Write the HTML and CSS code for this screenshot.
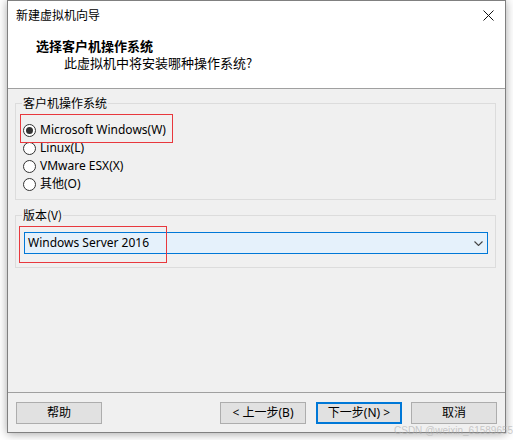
FILE: index.html
```html
<!DOCTYPE html>
<html lang="zh-CN">
<head>
<meta charset="utf-8">
<title>新建虚拟机向导</title>
<link rel="stylesheet" href="styles.css">
</head>
<body>
<div class="window">
  <div class="top">
    <div class="titlebar">
      <span class="title">新建虚拟机向导</span>
      <svg class="close" width="11" height="11" viewBox="0 0 11 11"><path d="M0.5 0.5 L10.5 10.5 M10.5 0.5 L0.5 10.5" stroke="#111" stroke-width="1" fill="none"/></svg>
    </div>
    <div class="header">
      <div class="h-title">选择客户机操作系统</div>
      <div class="h-sub">此虚拟机中将安装哪种操作系统?</div>
    </div>
  </div>
  <div class="content">
    <fieldset class="group">
      <legend>客户机操作系统</legend>
      <div class="radios">
        <div class="radio checked"><span class="circle"></span><span>Microsoft Windows(W)</span></div>
        <div class="radio"><span class="circle"></span><span>Linux(L)</span></div>
        <div class="radio"><span class="circle"></span><span>VMware ESX(X)</span></div>
        <div class="radio"><span class="circle"></span><span>其他(O)</span></div>
      </div>
    </fieldset>
    <fieldset class="group">
      <legend>版本(V)</legend>
      <div class="combo-wrap">
        <div class="combo">
          <span>Windows Server 2016</span>
          <svg class="chev" width="9" height="5" viewBox="0 0 9 5"><path d="M0.5 0.5 L4.5 4.5 L8.5 0.5" stroke="#444" stroke-width="1.1" fill="none"/></svg>
        </div>
      </div>
    </fieldset>
  </div>
  <div class="footer">
    <div class="btn">帮助</div>
    <div class="spacer"></div>
    <div class="btn">&lt; 上一步(B)</div>
    <div class="btn primary">下一步(N) &gt;</div>
    <div class="btn">取消</div>
  </div>
  <div class="mark m1"></div>
  <div class="mark m2"></div>
</div>
<div class="watermark">CSDN @weixin_61589655</div>
</body>
</html>
```

FILE: styles.css
```css
html, body {
  margin: 0;
  padding: 0;
  background: #ffffff;
}
body {
  width: 513px;
  height: 440px;
  overflow: hidden;
  position: relative;
  font-family: "Noto Sans", "Noto Sans CJK SC", sans-serif;
  font-size: 12px;
  color: #000;
}
.window {
  position: relative;
  margin-left: 7px;
  width: 499px;
  height: 433px;
  box-sizing: border-box;
  border: 1px solid #808080;
  background: #f0f0f0;
  display: flex;
  flex-direction: column;
  box-shadow: 0 1px 9px rgba(0, 0, 0, 0.35);
}
.top {
  background: #fff;
  border-bottom: 1px solid #a0a0a0;
  height: 88px;
  box-sizing: border-box;
}
.titlebar {
  height: 28px;
  display: flex;
  align-items: center;
  justify-content: space-between;
  padding: 0 11px 0 8px;
}
.title {
  font-family: "Noto Sans CJK SC", sans-serif;
  font-size: 12px;
  line-height: 16px;
}
.close {
  display: block;
  margin-top: 1px;
}
.header {
  padding-top: 8px;
  font-family: "Noto Sans CJK SC", sans-serif;
}
.h-title {
  font-weight: bold;
  font-size: 13px;
  line-height: 18px;
  padding-left: 28px;
}
.h-sub {
  font-size: 13px;
  line-height: 16px;
  padding-left: 56px;
}
.content {
  flex: 1;
  padding: 0 9px 0 7px;
}
.group {
  margin: 6px 0 0 0;
  padding: 0;
  border: 1px solid #dcdcdc;
  min-width: 0;
}
.group + .group {
  margin-top: 7px;
}
.group legend {
  margin-left: 6px;
  padding: 0 1px;
  line-height: 16px;
  font-family: "Noto Sans CJK SC", sans-serif;
  font-size: 12px;
}
.radios {
  padding: 10px 0 6px 7px;
}
.radio {
  height: 18px;
  display: flex;
  align-items: center;
  line-height: 16px;
}
.circle {
  width: 13px;
  height: 13px;
  box-sizing: border-box;
  border: 1px solid #333;
  border-radius: 50%;
  background: #fff;
  margin-right: 4px;
  display: flex;
  align-items: center;
  justify-content: center;
}
.radio.checked .circle::after {
  content: "";
  width: 7px;
  height: 7px;
  border-radius: 50%;
  background: #333;
}
.combo-wrap {
  padding: 9px 7px 13px 8px;
}
.combo {
  height: 22px;
  box-sizing: border-box;
  border: 1px solid #0078d7;
  background: #e5f1fb;
  display: flex;
  align-items: center;
  justify-content: space-between;
  padding: 0 4px 0 3px;
  line-height: 16px;
}
.chev {
  display: block;
  margin-top: 1px;
}
.footer {
  border-top: 1px solid #a0a0a0;
  padding: 9px 8px 8px 8px;
  display: flex;
  align-items: center;
}
.spacer {
  flex: 1;
}
.btn {
  width: 86px;
  height: 22px;
  box-sizing: border-box;
  border: 1px solid #adadad;
  background: #e1e1e1;
  display: flex;
  align-items: center;
  justify-content: center;
  line-height: 16px;
}
.btn + .btn {
  margin-left: 10px;
}
.btn.primary + .btn {
  margin-left: 9px;
}
.btn.primary {
  border: 2px solid #0078d7;
}
.mark {
  position: absolute;
  border: 1px solid #e8383d;
  box-sizing: border-box;
}
.m1 {
  left: 12px;
  top: 113px;
  width: 153px;
  height: 29px;
}
.m2 {
  left: 11px;
  top: 225px;
  width: 148px;
  height: 37px;
}
.watermark {
  position: absolute;
  left: 394px;
  top: 425px;
  font-family: "Liberation Sans", sans-serif;
  font-size: 10px;
  line-height: 12px;
  color: rgba(170, 170, 170, 0.6);
  white-space: nowrap;
}
```
